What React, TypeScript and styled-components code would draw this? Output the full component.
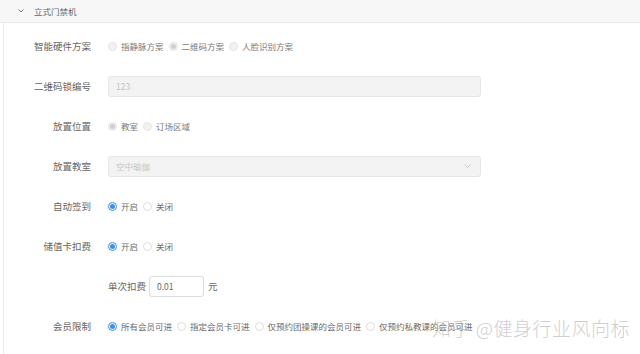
import * as React from 'react';
import styled, {createGlobalStyle} from 'styled-components';

const Global = createGlobalStyle`
    html, body {
        margin: 0;
        padding: 0;
        background: #fff;
        font-family: "Noto Sans CJK SC", "Noto Sans", sans-serif;
    }
`;

const Page = styled.div`
    position: relative;
    width: 640px;
    height: 354px;
    overflow: hidden;
    background: #fff;
`;

const Header = styled.div`
    display: flex;
    align-items: center;
    height: 22px;
    background: #f7f7f7;
    border-bottom: 1px solid #e9e9e9;
    padding-left: 18px;
`;

const Title = styled.span`
    margin-left: 10px;
    font-size: 8.5px;
    color: #666;
`;

const Body = styled.div`
    margin-left: 3px;
    border-left: 1px solid #ececec;
    padding-top: 3px;
    height: 330px;
`;

const Row = styled.div`
    display: flex;
    align-items: center;
    height: 40px;
`;

const Label = styled.div`
    width: 87px;
    text-align: right;
    font-size: 9.5px;
    color: #666;
    margin-right: 17px;
    flex-shrink: 0;
`;

const Control = styled.div`
    display: flex;
    align-items: center;
`;

const RadioItem = styled.label<{$disabled?: boolean}>`
    display: flex;
    align-items: center;
    margin-right: 5px;
    font-size: 8.5px;
    color: ${p => (p.$disabled ? '#7a7a7a' : '#6a6a6a')};
    white-space: nowrap;
`;

const Circle = styled.span<{$checked?: boolean; $disabled?: boolean}>`
    position: relative;
    box-sizing: border-box;
    width: 9px;
    height: 9px;
    border-radius: 50%;
    margin-right: 4px;
    border: 1px solid ${p => (p.$disabled ? '#e3e3e3' : p.$checked ? '#3a8ee6' : '#dcdcdc')};
    background: ${p => (p.$disabled ? '#f2f2f2' : '#fff')};
    &::after {
        content: '';
        display: ${p => (p.$checked ? 'block' : 'none')};
        position: absolute;
        left: 50%;
        top: 50%;
        width: 5px;
        height: 5px;
        margin: -2.5px 0 0 -2.5px;
        border-radius: 50%;
        background: ${p => (p.$disabled ? '#cfcfcf' : '#3a8ee6')};
    }
`;

const Field = styled.div<{$disabled?: boolean; $width: number}>`
    position: relative;
    box-sizing: border-box;
    display: flex;
    align-items: center;
    width: ${p => p.$width}px;
    height: 21px;
    padding-left: 7px;
    border: 1px solid ${p => (p.$disabled ? '#e6e6e6' : '#dcdcdc')};
    border-radius: 3px;
    background: ${p => (p.$disabled ? '#f3f3f3' : '#fff')};
    font-size: 8.5px;
    color: ${p => (p.$disabled ? '#c4c4c4' : '#666')};
`;

const SelectArrow = styled.svg`
    position: absolute;
    right: 9px;
    top: 7px;
`;

const Text = styled.span<{$ml?: number}>`
    font-size: 9.5px;
    color: #666;
    margin-left: ${p => p.$ml || 0}px;
    margin-right: 3px;
`;

const Watermark = styled.div`
    position: absolute;
    left: 432px;
    top: 314px;
    font-size: 19px;
    font-weight: 300;
    letter-spacing: 0.5px;
    color: rgba(185, 185, 185, 0.7);
    white-space: nowrap;
    pointer-events: none;
`;

interface RadioOpt {
    text: string;
    checked?: boolean;
}

const Radios = ({options, disabled}: {options: RadioOpt[]; disabled?: boolean}) => (
    <Control>
        {options.map((o, i) => (
            <RadioItem key={i} $disabled={disabled}>
                <Circle $checked={o.checked} $disabled={disabled} />
                {o.text}
            </RadioItem>
        ))}
    </Control>
);

export default function App() {
    return (
        <Page>
            <Global />
            <Header>
                <svg width="6" height="4" viewBox="0 0 6 4">
                    <path d="M0.5 0.5 L3 3 L5.5 0.5" fill="none" stroke="#777" strokeWidth="1" />
                </svg>
                <Title>立式门禁机</Title>
            </Header>
            <Body>
                <Row>
                    <Label>智能硬件方案</Label>
                    <Radios disabled options={[{text: '指静脉方案'}, {text: '二维码方案', checked: true}, {text: '人脸识别方案'}]} />
                </Row>
                <Row>
                    <Label>二维码锁编号</Label>
                    <Field $disabled $width={373}>123</Field>
                </Row>
                <Row>
                    <Label>放置位置</Label>
                    <Radios disabled options={[{text: '教室', checked: true}, {text: '订场区域'}]} />
                </Row>
                <Row>
                    <Label>放置教室</Label>
                    <Field $disabled $width={373}>
                        空中瑜伽
                        <SelectArrow width="7" height="5" viewBox="0 0 7 5">
                            <path d="M0.5 0.5 L3.5 3.5 L6.5 0.5" fill="none" stroke="#c8c8c8" strokeWidth="1" />
                        </SelectArrow>
                    </Field>
                </Row>
                <Row>
                    <Label>自动签到</Label>
                    <Radios options={[{text: '开启', checked: true}, {text: '关闭'}]} />
                </Row>
                <Row>
                    <Label>储值卡扣费</Label>
                    <Radios options={[{text: '开启', checked: true}, {text: '关闭'}]} />
                </Row>
                <Row>
                    <Label />
                    <Control>
                        <Text>单次扣费</Text>
                        <Field $width={55}>0.01</Field>
                        <Text $ml={4}>元</Text>
                    </Control>
                </Row>
                <Row>
                    <Label>会员限制</Label>
                    <Radios
                        options={[
                            {text: '所有会员可进', checked: true},
                            {text: '指定会员卡可进'},
                            {text: '仅预约团操课的会员可进'},
                            {text: '仅预约私教课的会员可进'},
                        ]}
                    />
                </Row>
            </Body>
            <Watermark>知乎 @健身行业风向标</Watermark>
        </Page>
    );
}
